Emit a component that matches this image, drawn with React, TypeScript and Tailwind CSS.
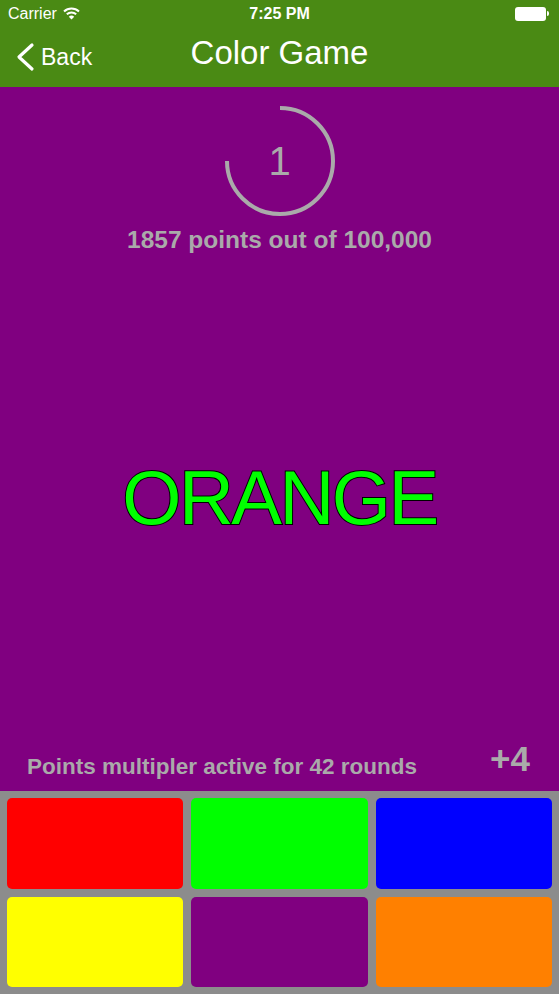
import React from "react";

const tiles = ["#ff0000", "#00ff00", "#0000ff", "#ffff00", "#800080", "#ff8000"];

const StatusBar = () => (
  <div className="relative flex h-[27px] items-center px-[8px] text-[16px] text-white">
    <span>Carrier</span>
    <svg width="17" height="13" viewBox="0 0 17 13" className="ml-[6px]">
      <path d="M1 4.5 A11 11 0 0 1 16 4.5" stroke="white" strokeWidth="2" fill="none" />
      <path d="M3.8 7.3 A7 7 0 0 1 13.2 7.3" stroke="white" strokeWidth="2" fill="none" />
      <path d="M8.5 12.5 L5.8 9.8 A3.8 3.8 0 0 1 11.2 9.8 Z" fill="white" />
    </svg>
    <span className="absolute left-1/2 -translate-x-1/2 font-semibold">7:25 PM</span>
    <div className="ml-auto mr-[2px] flex items-center">
      <div className="h-[14px] w-[31px] rounded-[3px] bg-white" />
      <div className="ml-[1px] h-[5px] w-[2px] rounded-r-sm bg-white" />
    </div>
  </div>
);

const NavBar = () => (
  <div className="relative flex h-[60px] items-center text-white">
    <div className="flex items-center pl-[16px]">
      <svg width="20" height="30" viewBox="0 0 20 30">
        <path d="M16 3 L3 15 L16 27" stroke="white" strokeWidth="3.2" fill="none" strokeLinecap="round" strokeLinejoin="round" />
      </svg>
      <span className="ml-[5px] text-[23px]">Back</span>
    </div>
    <span className="absolute left-1/2 top-[4px] -translate-x-1/2 text-[33px] leading-[44px]">Color Game</span>
  </div>
);

const Timer = () => (
  <div className="relative h-[112px] w-[112px]">
    <svg width="112" height="112" viewBox="0 0 112 112">
      <path d="M56 3 A53 53 0 1 1 3 56" stroke="#aaaaaa" strokeWidth="4" fill="none" />
    </svg>
    <span className="absolute inset-0 flex items-center justify-center text-[40px] text-[#aaaaaa]">1</span>
  </div>
);

export default function App() {
  return (
    <div
      className="flex h-[994px] w-[559px] flex-col overflow-hidden bg-[#800080]"
      style={{ fontFamily: '"Liberation Sans", Arial, sans-serif' }}
    >
      <div className="bg-[#4a8a14]">
        <StatusBar />
        <NavBar />
      </div>

      <div className="flex flex-1 flex-col items-center">
        <div className="mt-[18px]">
          <Timer />
        </div>
        <p className="mt-[9px] text-[24.5px] font-semibold leading-[28px] text-[#aaaaaa]">
          1857 points out of 100,000
        </p>
        <div className="flex flex-1 items-center">
          <span className="text-[76px] leading-none tracking-[-2.5px] text-[#00ff00] [-webkit-text-stroke:2px_#000] [paint-order:stroke_fill]">
            ORANGE
          </span>
        </div>
        <div className="flex w-full items-end justify-between pl-[27px] pr-[29px] pb-[7px]">
          <span className="text-[22.5px] font-semibold text-[#aaaaaa]">Points multipler active for 42 rounds</span>
          <span className="mb-[8px] text-[35px] font-bold leading-none text-[#aaaaaa]">+4</span>
        </div>
      </div>

      <div className="grid h-[203px] grid-cols-3 gap-[8px] bg-[#8c8c8c] p-[7px]">
        {tiles.map((c, i) => (
          <div key={i} className="rounded-[5px]" style={{ backgroundColor: c }} />
        ))}
      </div>
    </div>
  );
}
